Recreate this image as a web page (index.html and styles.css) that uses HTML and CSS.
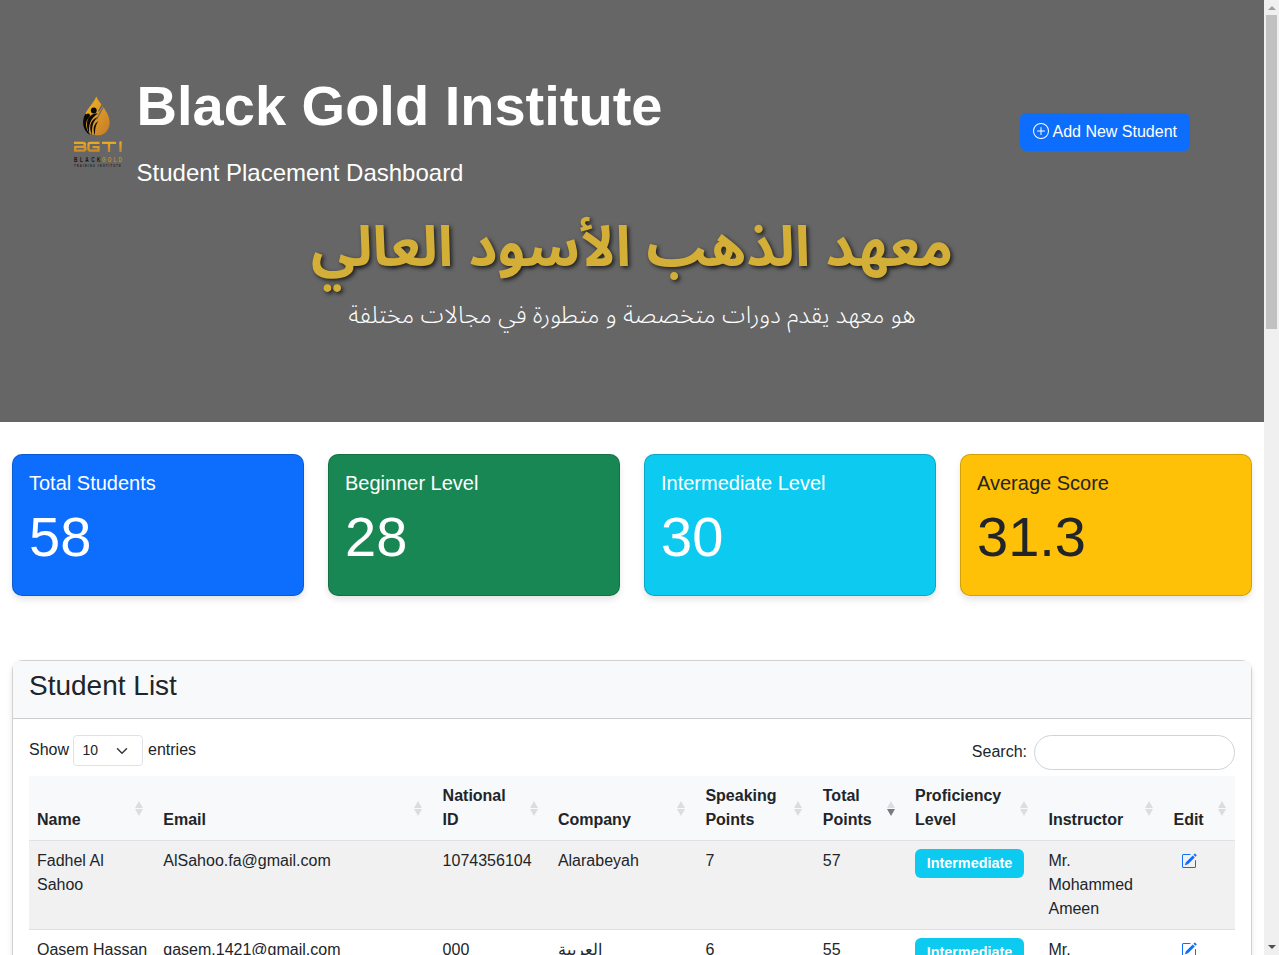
FILE: index.html
```html
<!DOCTYPE html>
<html lang="en">
<head>
<meta charset="utf-8">
<title>Black Gold Institute</title>
<link rel="stylesheet" href="styles.css">
</head>
<body>
<svg class="defs" width="0" height="0">
  <symbol id="edit" viewBox="0 0 16 16"><path d="M15.502 1.94a.5.5 0 0 1 0 .706L14.459 3.69l-2-2L13.502.646a.5.5 0 0 1 .707 0l1.293 1.293zm-1.75 2.456-2-2L4.939 9.21a.5.5 0 0 0-.121.196l-.805 2.414a.25.25 0 0 0 .316.316l2.414-.805a.5.5 0 0 0 .196-.12l6.813-6.814z"/><path fill-rule="evenodd" d="M1 13.5A1.5 1.5 0 0 0 2.5 15h11a1.5 1.5 0 0 0 1.5-1.5v-6a.5.5 0 0 0-1 0v6a.5.5 0 0 1-.5.5h-11a.5.5 0 0 1-.5-.5v-11a.5.5 0 0 1 .5-.5H9a.5.5 0 0 0 0-1H2.5A1.5 1.5 0 0 0 1 2.5v11z"/></symbol>
</svg>
<div class="window">
  <main class="page">
    <header class="hero">
      <div class="hero-row">
        <div class="brand">
          <svg class="logo" viewBox="0 0 48 72">
            <defs>
              <linearGradient id="gold" x1="0" y1="0" x2="1" y2="1"><stop offset="0" stop-color="#f6b81c"/><stop offset="1" stop-color="#c47a2c"/></linearGradient>
              <linearGradient id="bar" gradientUnits="userSpaceOnUse" x1="0" y1="45" x2="0" y2="56"><stop offset="0" stop-color="#edb021"/><stop offset="1" stop-color="#c9862a"/></linearGradient>
            </defs>
            <path fill="url(#gold)" d="M22.300 .5C20 6 16 10 12.500 15.500C8.500 21.500 8.500 29 12 34C16 39.500 26 41.500 31.500 36.500C36 32 36.500 26 34.500 20.500C33.200 16.500 30.600 13 28.600 10L25 16L24 15L27.500 8.500C25.500 6 23.300 3 22.300 .5Z"/>
            <path fill="none" stroke="#68686a" stroke-width="1.200" d="M29.500 10.500L22.500 23.500"/>
            <g fill="#0a0a0a">
              <circle cx="19.800" cy="14.500" r="2.900"/><circle cx="14" cy="19.500" r="2"/>
              <path d="M24 17.500C15 17 9.500 25 15.500 38.500C14 30 16 22.500 24 17.500Z"/>
              <path d="M24 21C17 23 14 30 18 39C17.500 31 19 25 24 21Z"/>
              <path d="M24.500 25C19.500 28 18.500 33 21 39.500C21 33 21.500 29 24.500 25Z"/>
              <path d="M11.500 17.500C7.500 24 8 34 16 39C11.500 32 10.500 26 15 21.500Z"/>
            </g>
            <path fill="none" stroke="url(#bar)" stroke-width="2.300" d="M0 46.800H9Q11 46.800 11 48.500T9 50.800H1.500M9 50.800Q11.500 50.800 11.500 52.700T9 54.700H1.200V50M25.500 46.800H16.500Q14.500 46.800 14.500 48.500V52.700Q14.500 54.700 16.500 54.700H24.500V51.200H18.500M28 46.800H42M35 46.800V56M46.500 45.500V56"/>
            <g class="logo-name">
              <text transform="translate(0 65.700) scale(.6 1)" textLength="44">BLACK</text>
              <text class="logo-gold" transform="translate(28 65.700) scale(.6 1)" textLength="33">GOLD</text>
            </g>
            <text class="logo-tag" transform="translate(0 70.500) scale(.7 1)" textLength="67">TRAINING INSTITUTE</text>
          </svg>
          <div class="titles">
            <h1>Black Gold Institute</h1>
            <p>Student Placement Dashboard</p>
          </div>
        </div>
        <a class="btn"><svg viewBox="0 0 16 16"><path d="M8 15A7 7 0 1 1 8 1a7 7 0 0 1 0 14zm0 1A8 8 0 1 0 8 0a8 8 0 0 0 0 16z"/><path d="M8 4a.5.5 0 0 1 .5.5v3h3a.5.5 0 0 1 0 1h-3v3a.5.5 0 0 1-1 0v-3h-3a.5.5 0 0 1 0-1h3v-3A.5.5 0 0 1 8 4z"/></svg><span>Add New Student</span></a>
      </div>
      <h2 class="ar-title" dir="rtl" lang="ar">معهد الذهب الأسود العالي</h2>
      <p class="ar-lead" dir="rtl" lang="ar">هو معهد يقدم دورات متخصصة و متطورة في مجالات مختلفة</p>
    </header>
    <section class="stats">
      <div class="stat blue"><h5>Total Students</h5><p>58</p></div>
      <div class="stat green"><h5>Beginner Level</h5><p>28</p></div>
      <div class="stat cyan"><h5>Intermediate Level</h5><p>30</p></div>
      <div class="stat yellow"><h5>Average Score</h5><p>31.3</p></div>
    </section>
    <section class="list">
      <div class="list-head"><h3>Student List</h3></div>
      <div class="list-body">
        <div class="tools">
          <div class="length"><span>Show</span><div class="select"><span>10</span><svg viewBox="0 0 16 16"><path d="m2 5 6 6 6-6"/></svg></div><span>entries</span></div>
          <label class="search">Search:<input type="text"></label>
        </div>
        <table>
          <colgroup><col class="c1"><col class="c2"><col class="c3"><col class="c4"><col class="c5"><col class="c6"><col class="c7"><col class="c8"><col class="c9"></colgroup>
          <thead><tr>
            <th>Name</th><th>Email</th><th>National ID</th><th>Company</th><th>Speaking Points</th><th class="desc">Total Points</th><th>Proficiency Level</th><th>Instructor</th><th class="last">Edit</th>
          </tr></thead>
          <tbody>
            <tr class="odd"><td>Fadhel Al Sahoo</td><td>AlSahoo.fa@gmail.com</td><td>1074356104</td><td>Alarabeyah</td><td>7</td><td>57</td><td><span class="badge">Intermediate</span></td><td>Mr. Mohammed Ameen</td><td><svg class="edit"><use href="#edit"/></svg></td></tr>
            <tr><td>Qasem Hassan</td><td>qasem.1421@gmail.com</td><td>000</td><td>العربية</td><td>6</td><td>55</td><td><span class="badge">Intermediate</span></td><td>Mr. Mohammed Ameen</td><td><svg class="edit"><use href="#edit"/></svg></td></tr>
          </tbody>
        </table>
      </div>
    </section>
  </main>
  <div class="scrollbar"><i class="up"></i><i class="thumb"></i><i class="down"></i></div>
</div>
</body>
</html>
```
FILE: styles.css
```css
* { box-sizing: border-box; }
body { margin: 0; font: 16px/24px "Liberation Sans", Arial, sans-serif; color: #212529; background: #fff; }
h1, h2, h3, h5, p { margin: 0; }
.defs { display: none; }
.window { display: flex; height: 955px; overflow: hidden; }
.page { width: 1264px; height: 955px; overflow: hidden; }
.hero { height: 422px; padding: 72px 74px 0; background: #666; color: #fff; }
.hero-row { display: flex; justify-content: space-between; align-items: center; height: 119px; }
.brand { display: flex; align-items: center; gap: 14.6px; }
.logo { width: 48px; height: 72px; overflow: visible; }
.logo-name { font: bold 7.8px "Liberation Sans", sans-serif; fill: #151515; }
.logo-gold { fill: #c88a2a; }
.logo-tag { font: bold 3.8px "Liberation Sans", sans-serif; fill: #222; }
.titles h1 { font-size: 56px; line-height: 67px; font-weight: 700; }
.titles p { font-size: 24px; line-height: 36px; margin-top: 16px; }
.btn { display: flex; align-items: center; gap: 3.5px; height: 38px; padding: 0 13px; border-radius: 6px; background: #0d6efd; }
.btn svg { width: 16px; height: 16px; margin-top: -2px; fill: #fff; }
.ar-title, .ar-lead { font-family: "Noto Sans Arabic", "Vazirmatn", "Cairo", "Tajawal", "Open Sans", "Noto Sans", sans-serif; text-align: center; }
.ar-title { margin-top: 24px; font-size: 56px; line-height: 67px; font-weight: 700; word-spacing: 1px; color: #d4af37; text-shadow: 2px 2px 4px rgba(0,0,0,.7); }
.ar-lead { margin-top: 16px; font-size: 24px; line-height: 36px; font-weight: 300; }
.stats { display: grid; grid-template-columns: repeat(4, 1fr); gap: 24px; padding: 32px 12px 0; }
.stat { height: 142px; padding: 16px; border: 1px solid rgba(0,0,0,.176); border-radius: 10px; box-shadow: 0 4px 6px rgba(0,0,0,.1); color: #fff; }
.stat h5 { font-size: 20px; line-height: 24px; font-weight: 400; }
.stat p { margin-top: 8px; font-size: 56px; line-height: 67px; font-weight: 300; }
.blue { background-color: #0d6efd; }
.green { background-color: #198754; }
.cyan { background-color: #0dcaf0; }
.yellow { background-color: #ffc107; color: #212529; }
.list { margin: 64px 12px 0; border: 1px solid rgba(0,0,0,.176); border-radius: 10px; box-shadow: 0 4px 6px rgba(0,0,0,.1); height: 500px; }
.list-head { height: 58px; padding: 8px 16px; background: #f8f9fb; border-bottom: 1px solid rgba(0,0,0,.176); border-radius: 5px 5px 0 0; }
.list-head h3 { font-size: 28px; line-height: 34px; font-weight: 400; }
.list-body { padding: 16px; }
.tools { display: flex; justify-content: space-between; height: 41px; }
.length { display: flex; align-items: flex-start; line-height: 29px; }
.select { display: flex; align-items: center; justify-content: space-between; width: 70px; height: 31px; margin: 0 5px 0 4px; padding: 0 14px 0 8.5px; border: 1px solid #dee2e6; border-radius: 4px; font-size: 14px; }
.select svg { width: 12px; height: 12px; margin-top: 1px; fill: none; stroke: #343a40; stroke-width: 2; stroke-linecap: round; stroke-linejoin: round; }
.search { display: flex; align-items: flex-start; line-height: 33px; }
.search input { width: 201px; height: 35px; margin: 0 0 0 7px; padding: 4px 12px; border: 1px solid #ced4da; border-radius: 20px; }
table { width: 1206px; table-layout: fixed; border-collapse: separate; border-spacing: 0; }
.c1 { width: 126.3px; } .c2 { width: 279.3px; } .c3 { width: 115.3px; } .c4 { width: 147.5px; } .c5 { width: 117.4px; } .c6 { width: 92.2px; } .c7 { width: 133.5px; } .c8 { width: 125px; } .c9 { width: 69.5px; }
th { position: relative; height: 65px; padding: 8px 26px 8px 8px; text-align: left; vertical-align: bottom; background: #f8f9fb; border-bottom: 1px solid #dee2e6; }
th::before, th::after { content: ""; position: absolute; right: 12.4px; border: 4px solid transparent; opacity: .13; }
th::before { bottom: 32px; border-top: 0; border-bottom: 7.5px solid #212529; }
th::after { top: 33px; border-bottom: 0; border-top: 7.5px solid #212529; }
th.desc::after { opacity: .6; }
th.last::before, th.last::after { right: 9px; }
td { height: 89px; padding: 8px; vertical-align: top; border-bottom: 1px solid #dee2e6; }
.odd td { background: #f1f1f1; }
.badge { display: block; width: 109px; height: 29px; border-radius: 6px; background: #0dcaf0; color: #fff; font-size: 14.4px; line-height: 28px; font-weight: 700; text-align: center; }
.edit { display: block; width: 16px; height: 16px; margin: 4px 0 0 8px; fill: #0d6efd; }
.scrollbar { display: flex; flex-direction: column; align-items: center; width: 15px; height: 955px; background: #f0f0f0; }
.up { margin-top: 6px; border: 4px solid transparent; border-top: 0; border-bottom-color: #a0a0a0; }
.thumb { width: 11px; height: 314px; margin-top: 5px; background: #c1c1c1; }
.down { margin-top: auto; margin-bottom: 6px; border: 4px solid transparent; border-bottom: 0; border-top-color: #505050; }
```
